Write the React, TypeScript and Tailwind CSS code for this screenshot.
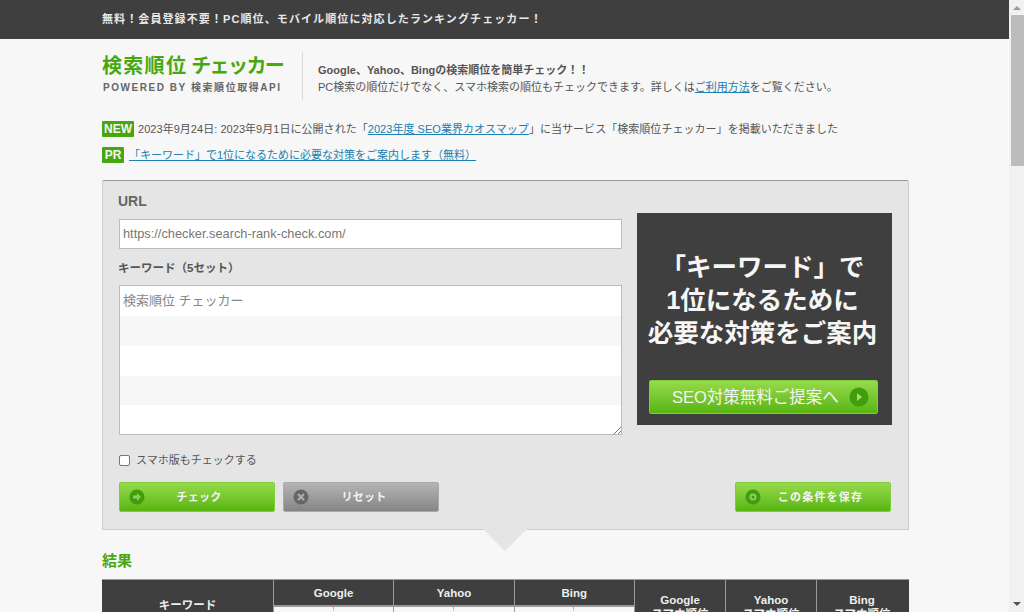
import type { ReactNode } from "react";

const font = "font-['Liberation_Sans','Noto_Sans_CJK_JP',sans-serif]";

function ArrowIcon() {
  return (
    <svg width="16" height="16" viewBox="0 0 16 16" className="shrink-0">
      <circle cx="8" cy="8" r="7.5" fill="#3f9e0e" />
      <path d="M4 6.5h4V4l4 4-4 4V9.5H4z" fill="#8fce5a" />
    </svg>
  );
}

function Btn({ label, icon, gray, wide }: { label: string; icon: ReactNode; gray?: boolean; wide?: boolean }) {
  return (
    <div
      className={`w-[156px] h-[30px] rounded-[2px] border flex items-center pl-[9px] ${
        gray
          ? "bg-gradient-to-b from-[#b5b5b5] to-[#858585] border-[#aaa]"
          : "bg-gradient-to-b from-[#96da4a] to-[#57b50b] border-[#80cc3a]"
      }`}
    >
      {icon}
      <span
        className={`flex-1 text-center font-bold text-[11px] text-[#f4f4f4] whitespace-nowrap ${
          wide ? "pr-[10px] tracking-[1.2px]" : gray ? "pr-[19px] tracking-[0.2px]" : "pr-[21px] tracking-[0.2px]"
        }`}
      >
        {label}
      </span>
    </div>
  );
}

export default function App() {
  return (
    <div className={`${font} h-[612px] w-[1024px] overflow-hidden flex bg-[#f7f7f7] text-[#555]`}>
      <div className="w-[1009px] shrink-0">
        <div className="h-[39px] bg-[#3f3f3f] flex items-center pl-[102px] text-[11px] font-bold tracking-[1.1px] text-[#e8e8e8] whitespace-nowrap">
          無料！会員登録不要！PC順位、モバイル順位に対応したランキングチェッカー！
        </div>
        <div className="w-[807px] ml-[102px]">
          <div className="flex h-[48px] mt-[13px]">
            <div className="w-[200px]">
              <div className="text-[20px] leading-[26px] mt-[1px] font-bold text-[#46a80e] whitespace-nowrap">
                <span className="tracking-[1.3px]">検索順位</span>
                <span className="ml-[4px] tracking-[-1.6px]">チェッカー</span>
              </div>
              <div className="text-[10px] leading-[14px] mt-[2px] font-bold tracking-[1.55px] text-[#666] whitespace-nowrap pl-[1px]">
                POWERED BY 検索順位取得API
              </div>
            </div>
            <div className="w-px bg-[#d8d8d8] h-[48px]" />
            <div className="pl-[15px] text-[11px] leading-[17px] pt-[10px] whitespace-nowrap">
              <div className="font-bold">Google、Yahoo、Bingの検索順位を簡単チェック！！</div>
              <div>
                PC検索の順位だけでなく、スマホ検索の順位もチェックできます。詳しくは
                <span className="text-[#2080b0] underline">ご利用方法</span>をご覧ください。
              </div>
            </div>
          </div>
          <div className="flex items-center h-[16px] mt-[21px] text-[11px] tracking-[0.04px] whitespace-nowrap">
            <span className="bg-[#46a80e] text-[#f4f4f4] font-bold text-[12px] leading-[16px] w-[32px] text-center rounded-[1px] mr-[4px] tracking-normal">
              NEW
            </span>
            2023年9月24日: 2023年9月1日に公開された「<span className="text-[#2080b0] underline">2023年度 SEO業界カオスマップ</span>」に当サービス「検索順位チェッカー」を掲載いただきました
          </div>
          <div className="flex items-center h-[16px] mt-[10px] text-[11px] whitespace-nowrap">
            <span className="bg-[#46a80e] text-[#f4f4f4] font-bold text-[12px] leading-[16px] w-[22px] text-center rounded-[1px] mr-[5px]">
              PR
            </span>
            <span className="text-[#2080b0] underline">「キーワード」で1位になるために必要な対策をご案内します（無料）</span>
          </div>
          <div className="relative mt-[17px] h-[350px] bg-[#e5e5e5] border border-[#ccc] border-t-[#999] rounded-t-[2px] pl-[16px] pr-[16px] flex">
            <div className="w-[503px]">
              <div className="text-[14px] font-bold text-[#666] leading-[16px] mt-[12px] -ml-px">URL</div>
              <div className="h-[30px] mt-[10px] bg-white border border-[#bbb] pl-[3px] flex items-center text-[12.8px] text-[#777]">
                https://checker.search-rank-check.com/
              </div>
              <div className="text-[11.5px] font-bold leading-[16px] mt-[11px] -ml-px">キーワード（5セット）</div>
              <div className="relative h-[150px] mt-[9px] border border-[#bbb] bg-white flex flex-col">
                <div className="h-[30px] pl-[3px] flex items-center text-[13px] text-[#888]">検索順位 チェッカー</div>
                <div className="h-[30px] bg-[#f7f7f7]" />
                <div className="h-[30px]" />
                <div className="h-[29px] bg-[#f7f7f7]" />
                <div className="h-[29px]" />
                <svg width="9" height="9" viewBox="0 0 9 9" className="absolute right-0 bottom-0">
                  <path d="M2 9L9 2M6 9l3-3" stroke="#777" strokeWidth="1" />
                </svg>
              </div>
              <div className="flex items-center mt-[18px] h-[14px] text-[11px]">
                <span className="w-[11px] h-[11px] bg-white border border-[#777] rounded-[2px] mr-[6px]" />
                スマホ版もチェックする
              </div>
              <div className="flex gap-[8px] mt-[15px]">
                <Btn label="チェック" icon={<ArrowIcon />} />
                <Btn
                  gray
                  label="リセット"
                  icon={
                    <svg width="16" height="16" viewBox="0 0 16 16" className="shrink-0">
                      <circle cx="8" cy="8" r="7.5" fill="#666" />
                      <path d="M5 5l6 6M11 5l-6 6" stroke="#b0b0b0" strokeWidth="2" />
                    </svg>
                  }
                />
              </div>
            </div>
            <div className="ml-[15px] w-[255px] flex flex-col">
              <div className="h-[212px] mt-[32px] bg-[#3f3f3f] flex flex-col items-center">
                <div className="mt-[38px] -ml-[4px] text-[25.5px] leading-[33px] font-bold text-[#f6f6f6] text-center whitespace-nowrap">
                  <div>「キーワード」で</div>
                  <div>1位になるために</div>
                  <div>必要な対策をご案内</div>
                </div>
                <div className="mt-[30px] -ml-[2px] w-[229px] h-[34px] rounded-[2px] border border-[#80cc3a] bg-gradient-to-b from-[#96da4a] to-[#57b50b] flex items-center justify-between pl-[22px] pr-[8px] text-[16.5px] text-[#f4f4f4] whitespace-nowrap">
                  SEO対策無料ご提案へ
                  <svg width="20" height="20" viewBox="0 0 20 20">
                    <circle cx="10" cy="10" r="9.5" fill="#3f9e0e" />
                    <path d="M8 6l5 4-5 4z" fill="#a6dc70" />
                  </svg>
                </div>
              </div>
              <div className="mt-[57px] ml-[98px]">
                <Btn
                  wide
                  label="この条件を保存"
                  icon={
                    <svg width="16" height="16" viewBox="0 0 16 16" className="shrink-0">
                      <circle cx="8" cy="8" r="7.5" fill="#3f9e0e" />
                      <circle cx="8" cy="8" r="2.5" fill="none" stroke="#8fce5a" strokeWidth="2" />
                    </svg>
                  }
                />
              </div>
            </div>
            <div className="absolute left-[380px] top-full w-0 h-0 border-l-[22px] border-r-[22px] border-t-[22px] border-l-transparent border-r-transparent border-t-[#e5e5e5]" />
          </div>
          <div className="text-[15px] font-bold leading-[20px] text-[#46a80e] mt-[21px]">結果</div>
          <div className="mt-[8px] h-[60px] bg-[#3f3f3f] flex text-[11.5px] font-bold text-[#eee] text-center border-t border-[#999]">
            <div className="w-[171px] pt-[17px]">キーワード</div>
            <div className="w-[361px] flex">
              {["Google", "Yahoo", "Bing"].map((n) => (
                <div key={n} className="w-[120.5px] border-l border-[#999]">
                  <div className="h-[27px] leading-[26px] border-b-2 border-[#999]">{n}</div>
                  <div className="flex h-[36px] bg-[#f7f7f7]">
                    <div className="w-1/2 border-r border-dotted border-[#aaa]" />
                  </div>
                </div>
              ))}
            </div>
            {["Google", "Yahoo", "Bing"].map((n) => (
              <div key={n} className="w-[91px] border-l border-[#999] pt-[13px] leading-[14px]">
                {n}
                <br />
                スマホ順位
              </div>
            ))}
          </div>
        </div>
      </div>
      <div className="w-[15px] bg-[#f1f1f1] relative">
        <div className="absolute top-[15px] left-[2px] w-[13px] h-[151px] bg-[#bcbcbc]" />
        <div className="absolute top-[6px] left-[4px] w-0 h-0 border-l-[4px] border-r-[4px] border-b-[4px] border-l-transparent border-r-transparent border-b-[#999]" />
        <div className="absolute top-[602px] left-[4px] w-0 h-0 border-l-[4px] border-r-[4px] border-t-[4px] border-l-transparent border-r-transparent border-t-[#555]" />
      </div>
    </div>
  );
}
